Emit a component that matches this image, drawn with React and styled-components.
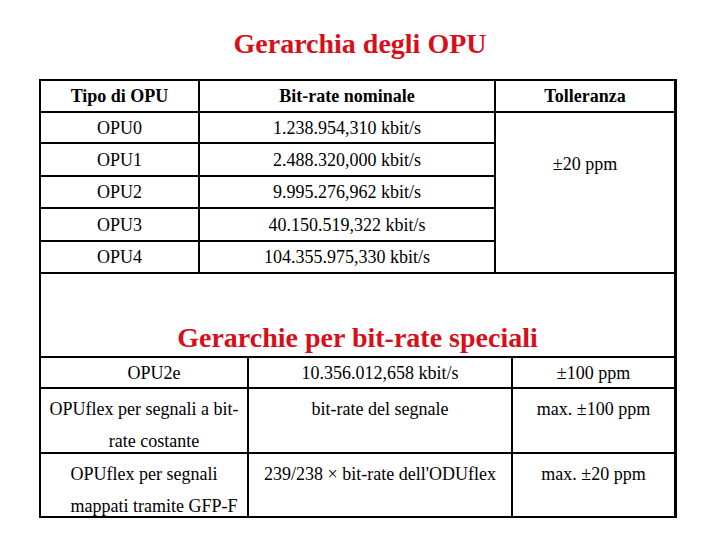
import React from 'react';
import styled, { createGlobalStyle } from 'styled-components';

const GlobalStyle = createGlobalStyle`
  html, body {
    margin: 0;
    padding: 0;
    background: #ffffff;
  }
  body {
    font-family: "Liberation Serif", "Times New Roman", serif;
    color: #000000;
  }
`;

const RED = '#d5101a';

const Page = styled.main`
  width: 720px;
  height: 540px;
  overflow: hidden;
`;

const Title = styled.h1`
  margin: 0 0 19px;
  padding-top: 28px;
  font-size: 28px;
  line-height: 32px;
  font-weight: 700;
  color: ${RED};
  text-align: center;
`;

const Frame = styled.section`
  margin-left: 39px;
  width: 633px;
  border: 2px solid #000;
  border-right-width: 3px;
  display: flex;
  flex-direction: column;
`;

const Grid = styled.div`
  display: grid;
  grid-template-columns: ${(p) => p.$cols};
  grid-template-rows: ${(p) => p.$rows};
  gap: 2px;
  background: #000;
  ${(p) => p.$top && 'border-top: 2px solid #000;'}
  ${(p) => p.$bottom && 'border-bottom: 2px solid #000;'}
`;

const Cell = styled.div`
  background: #fff;
  display: flex;
  flex-direction: column;
  align-items: center;
  justify-content: ${(p) => (p.$top ? 'flex-start' : 'center')};
  padding-top: ${(p) => p.$padTop || 0}px;
  font-size: 18px;
  line-height: ${(p) => (p.$top ? 32 : 30)}px;
  font-weight: ${(p) => (p.$bold ? 700 : 400)};
  text-align: center;
  white-space: nowrap;
  ${(p) => p.$span && `grid-column: 3; grid-row: 2 / span 5;`}
`;

const Line = styled.span`
  display: block;
  padding-left: ${(p) => p.$indent || 0}px;
`;

const HeadingArea = styled.div`
  height: 82px;
  display: flex;
  align-items: flex-end;
  justify-content: center;
  padding-bottom: 2px;
  box-sizing: border-box;
`;

const Heading = styled.h2`
  margin: 0;
  font-size: 28px;
  line-height: 32px;
  font-weight: 700;
  color: ${RED};
`;

const opus = [
  ['OPU0', '1.238.954,310 kbit/s'],
  ['OPU1', '2.488.320,000 kbit/s'],
  ['OPU2', '9.995.276,962 kbit/s'],
  ['OPU3', '40.150.519,322 kbit/s'],
  ['OPU4', '104.355.975,330 kbit/s'],
];

const App = () => {
  return (
    <Page>
      <GlobalStyle />
      <Title>Gerarchia degli OPU</Title>
      <Frame>
        <Grid $cols="157px 294px 178px" $rows="30px 29px 31px 30px 31px 30px" $bottom>
          <Cell $bold>Tipo di OPU</Cell>
          <Cell $bold>Bit-rate nominale</Cell>
          <Cell $bold>Tolleranza</Cell>
          {opus.map(([name, rate]) => (
            <React.Fragment key={name}>
              <Cell>{name}</Cell>
              <Cell>{rate}</Cell>
            </React.Fragment>
          ))}
          <Cell $span $top $padTop={35}>±20 ppm</Cell>
        </Grid>

        <HeadingArea>
          <Heading>Gerarchie per bit-rate speciali</Heading>
        </HeadingArea>

        <Grid $cols="206px 262px 161px" $rows="29px 63px 62px" $top>
          <Cell>
            <Line $indent={20}>OPU2e</Line>
          </Cell>
          <Cell>10.356.012,658 kbit/s</Cell>
          <Cell>±100 ppm</Cell>

          <Cell $top $padTop={4}>
            <Line>OPUflex per segnali a bit-</Line>
            <Line $indent={20}>rate costante</Line>
          </Cell>
          <Cell $top $padTop={4}>bit-rate del segnale</Cell>
          <Cell $top $padTop={4}>max. ±100 ppm</Cell>

          <Cell $top $padTop={4}>
            <Line>OPUflex per segnali</Line>
            <Line $indent={20}>mappati tramite GFP-F</Line>
          </Cell>
          <Cell $top $padTop={4}>239/238 × bit-rate dell'ODUflex</Cell>
          <Cell $top $padTop={4}>max. ±20 ppm</Cell>
        </Grid>
      </Frame>
    </Page>
  );
};

export default App;
